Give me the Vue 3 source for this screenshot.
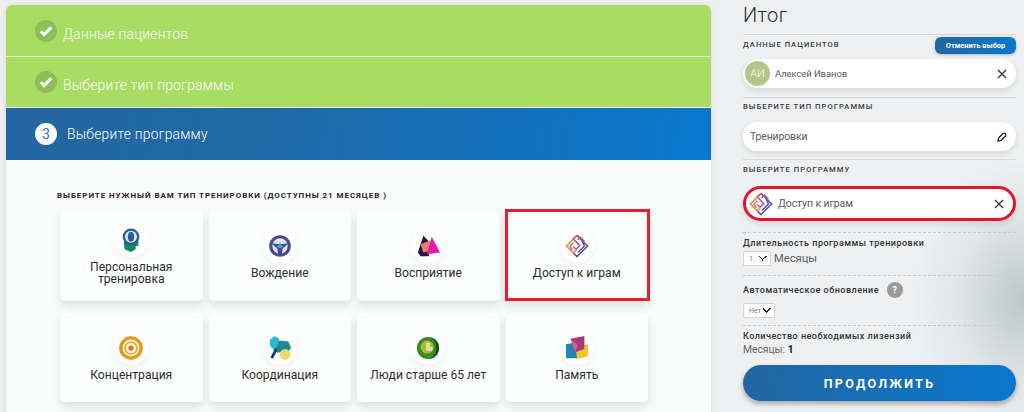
<script setup>
const cards = [
  { id: 'head', title: 'Персональная тренировка' },
  { id: 'wheel', title: 'Вождение' },
  { id: 'tri', title: 'Восприятие' },
  { id: 'maze', title: 'Доступ к играм', marked: true },
  { id: 'target', title: 'Концентрация' },
  { id: 'coord', title: 'Координация' },
  { id: 'old', title: 'Люди старше 65 лет' },
  { id: 'mem', title: 'Память' },
]
</script>

<template>
  <div class="page">
    <main class="panel">
      <div class="step done">
        <span class="badge check">
          <svg width="14" height="12" viewBox="0 0 14 12"><path d="M1.8 6.2 5.2 9.6 12.2 2.4" fill="none" stroke="#fff" stroke-width="3"/></svg>
        </span>
        <span class="step-text">Данные пациентов</span>
      </div>
      <div class="step done second">
        <span class="badge check">
          <svg width="14" height="12" viewBox="0 0 14 12"><path d="M1.8 6.2 5.2 9.6 12.2 2.4" fill="none" stroke="#fff" stroke-width="3"/></svg>
        </span>
        <span class="step-text">Выберите тип программы</span>
      </div>
      <div class="step active">
        <span class="badge num">3</span>
        <span>Выберите программу</span>
      </div>
      <section class="content">
        <h3>Выберите нужный вам тип тренировки (доступны 21 месяцев )</h3>
        <div class="grid">
          <div v-for="c in cards" :key="c.id" class="card" :class="{ marked: c.marked }">
            <span class="ico">
              <svg width="24" height="24" viewBox="0 0 26 26">
                <template v-if="c.id === 'head'">
                  <path d="M13 26 6 23 5 15 21 14 21 19 18 20 18 23Z" fill="#138a5e" />
                  <circle cx="13" cy="9.500" r="9" fill="#1f5f9e" />
                  <circle cx="13" cy="9.500" r="6.500" fill="#dbe7ee" />
                  <ellipse cx="13" cy="9.500" rx="3.500" ry="5.500" fill="#235f9a" />
                </template>
                <template v-else-if="c.id === 'wheel'">
                  <circle cx="13" cy="13" r="10" fill="#dfe7f2" stroke="#4a4a8c" stroke-width="3.400" />
                  <path d="M4 10 13 11 22 10 16 16 15 22 11 22 10 16Z" fill="#4a4a8c" />
                  <path d="M9 14 13 9.500 17 14 13 15.500Z" fill="#2fa6d6" />
                </template>
                <template v-else-if="c.id === 'tri'">
                  <path d="M2 20 8 2 13 7 14 24 5 24Z" fill="#2a1245" />
                  <path d="M5 11 15 7 19 17 8 20Z" fill="#e8806c" />
                  <path d="M17 3 26 20 12 22Z" fill="#e81aa8" />
                </template>
                <template v-else-if="c.id === 'maze'">
                  <g fill="none" stroke-width="1.700">
                    <path d="M13 1.500 24.500 13 13 24.500 9 20.500M18 6.500 21 13 14 20" stroke="#5a55b5" />
                    <path d="M13 1.500 9 5.500 16 12.500 12 16.500 9 13.500M13.500 6.500 17 3.500 21 8" stroke="#c0508c" />
                    <path d="M9 5.500 1.500 13 9 20.500 12.500 17" stroke="#ef8a4a" />
                    <path d="M5.500 13 9 9.500M8 17 5 13" stroke="#e06a6a" />
                  </g>
                </template>
                <template v-else-if="c.id === 'target'">
                  <circle cx="13" cy="13" r="11" fill="#fbf3dc" stroke="#dd9a1b" stroke-width="3.600" />
                  <circle cx="13" cy="13" r="6.500" fill="none" stroke="#e8a838" stroke-width="1.800" />
                  <circle cx="13" cy="13" r="2.800" fill="#d8701e" />
                </template>
                <template v-else-if="c.id === 'coord'">
                  <path d="M4 6 13 5 22 6 25 13 21 18 10 18 6 15Z" fill="#1b8a94" />
                  <path d="M2 4 7 0 12 3 11 9 8 14 4 13 2 9Z" fill="#2ab8d0" />
                  <path d="M4 24 9 14" stroke="#123e70" stroke-width="3" />
                  <circle cx="18.500" cy="20" r="5.800" fill="#ecd968" />
                </template>
                <template v-else-if="c.id === 'old'">
                  <circle cx="13" cy="13" r="12" fill="#3b8c1e" />
                  <path d="M13 1A12 12 0 0 1 13 25 9 12 0 0 0 13 1Z" fill="#174a14" />
                  <circle cx="12" cy="12" r="7" fill="#a9bb3c" />
                  <path d="M11 7H15V12H18V16H11Z" fill="#e5e2a0" />
                </template>
                <template v-else>
                  <path d="M1 9 12 7 13 24 1 24Z" fill="#1f86b8" />
                  <path d="M12 11 25 9 25 22 13 25Z" fill="#f0c828" />
                  <path d="M6 3 21 0 21 14 11 18Z" fill="#a63a78" />
                  <path d="M6 3 14 10 11 18Z" fill="#d9607a" />
                </template>
              </svg>
            </span>
            <span class="title">{{ c.title }}</span>
          </div>
        </div>
      </section>
    </main>

    <aside class="summary">
      <h2>Итог</h2>
      <div class="group first">
        <div class="label-row">
          <span class="label">Данные пациентов</span>
          <button class="cancel">Отменить выбор</button>
        </div>
        <div class="pill person">
          <span class="avatar">АИ</span>
          <span class="pill-text">Алексей Иванов</span>
          <svg class="action" width="10" height="10" viewBox="0 0 10 10"><path d="M1 1 9 9M9 1 1 9" stroke="#333" stroke-width="1.300" /></svg>
        </div>
      </div>
      <div class="group second-group">
        <div class="label">Выберите тип программы</div>
        <div class="pill plain">
          <span class="pill-text big">Тренировки</span>
          <svg class="action" width="10" height="10" viewBox="0 0 10 10"><path d="M1.500 6 6 1.500Q7 .8 8 1.500L8.500 2Q9.200 3 8.500 4L4 8.500 1 9Z" fill="none" stroke="#222" stroke-width="1.300" /></svg>
        </div>
      </div>
      <div class="group third-group">
        <div class="label">Выберите программу</div>
        <div class="pill chosen">
          <svg width="24" height="24" viewBox="0 0 26 26">
            <g fill="none" stroke-width="1.700">
              <path d="M13 1.500 24.500 13 13 24.500 9 20.500M18 6.500 21 13 14 20" stroke="#5a55b5" />
              <path d="M13 1.500 9 5.500 16 12.500 12 16.500 9 13.500M13.500 6.500 17 3.500 21 8" stroke="#c0508c" />
              <path d="M9 5.500 1.500 13 9 20.500 12.500 17" stroke="#ef8a4a" />
              <path d="M5.500 13 9 9.500M8 17 5 13" stroke="#e06a6a" />
            </g>
          </svg>
          <span class="pill-text chosen-text">Доступ к играм</span>
          <svg class="action" width="10" height="10" viewBox="0 0 10 10"><path d="M1 1 9 9M9 1 1 9" stroke="#333" stroke-width="1.300" /></svg>
        </div>
      </div>
      <div class="group dashed duration">
        <div class="field-label">Длительность программы тренировки</div>
        <div class="inline">
          <select class="sel one"><option>1</option></select>
          <span class="unit">Месяцы</span>
        </div>
      </div>
      <div class="group dashed renew">
        <div class="field-label with-help">Автоматическое обновление <span class="help">?</span></div>
        <select class="sel no"><option>Нет</option></select>
      </div>
      <div class="group dashed licenses">
        <div class="field-label">Количество необходимых лизензий</div>
        <div class="months">Месяцы: <b>1</b></div>
      </div>
      <button class="go">Продолжить</button>
    </aside>
  </div>
</template>

<style>
html, body { margin: 0; overflow: hidden; }
</style>

<style scoped>
.page {
  width: 1024px;
  height: 412px;
  overflow: hidden;
  box-sizing: border-box;
  padding: 5px 8px 0 6px;
  display: flex;
  gap: 32px;
  font-family: Roboto, "Liberation Sans", sans-serif;
  background: radial-gradient(ellipse 110px 140px at 1024px 300px, #bcc8c8 0%, rgba(215,222,222,.6) 60%, rgba(238,240,241,0) 100%), #eef0f1;
}
.panel {
  width: 705px;
  height: 420px;
  flex: none;
  border-radius: 6px 6px 0 0;
  overflow: hidden;
  background: #f9fafa;
  box-shadow: 0 0 6px rgba(0, 0, 0, .1);
}
.step {
  height: 51px;
  display: flex;
  align-items: center;
  gap: 6px;
  padding-left: 29px;
  font-size: 13.800px;
  font-weight: 300;
  color: #fff;
  letter-spacing: .25px;
}
.step-text { padding-top: 6px; }
.done { background: #a8dc63; }
.done.second { height: 50px; border-top: 1px solid #e4f3cf; margin-bottom: 1px; }
.active { height: 52px; gap: 10px; background: linear-gradient(100deg, #24669f 0%, #1f6aa8 40%, #0878cf 100%); }
.badge {
  width: 22px;
  height: 22px;
  border-radius: 50%;
  display: flex;
  align-items: center;
  justify-content: center;
  flex: none;
}
.check { background: #8dbe58; }
.num { background: #fff; color: #1f72b8; font-size: 14px; font-weight: 400; }
.content { padding: 30px 0 0 51px; }
h3 {
  margin: 0 0 9px;
  font-size: 8px;
  line-height: 11px;
  font-weight: 700;
  letter-spacing: .930px;
  text-transform: uppercase;
  color: #2b2426;
}
.grid {
  width: 596px;
  display: grid;
  grid-template-columns: repeat(4, 142.500px);
  grid-template-rows: 91px 89px;
  gap: 12px 6px;
  padding-left: 3px;
}
.card {
  position: relative;
  background: #fdfefe;
  border-radius: 5px;
  box-shadow: 0 5px 9px rgba(0, 0, 0, .1);
  display: flex;
  flex-direction: column;
  align-items: center;
  justify-content: center;
  padding-bottom: 3px;
  box-sizing: border-box;
}
.card.marked { border-radius: 0; }
.card.marked::after {
  content: '';
  position: absolute;
  left: -1px;
  right: -2px;
  top: -1px;
  bottom: 0;
  border: 3px solid #ed1c2e;
}
.ico {
  width: 34px;
  height: 34px;
  border-radius: 50%;
  background: #fff;
  box-shadow: 0 3px 8px rgba(0, 0, 0, .06);
  display: flex;
  align-items: center;
  justify-content: center;
  flex: none;
}
.title {
  margin-top: 4px;
  font-size: 12.100px;
  line-height: 12px;
  padding: 0 6px;
  color: #2d2d2d;
  text-align: center;
}
.card:first-child .title { padding: 0 24px; }
.summary { width: 273px; flex: none; color: #333; }
h2 {
  margin: -1px 0 0;
  height: 30px;
  font-size: 20px;
  line-height: 22px;
  font-weight: 300;
  color: #2a2a2a;
  letter-spacing: .4px;
}
.group { border-top: 1px solid #d5d9da; }
.label, .field-label {
  font-size: 7.600px;
  line-height: 12px;
  letter-spacing: 1.050px;
  text-transform: uppercase;
  font-weight: 500;
  color: #3a3a3a;
}
.field-label { font-size: 9px; text-transform: none; letter-spacing: .5px; color: #333; }
.label-row { display: flex; justify-content: space-between; align-items: flex-start; padding-top: 1px; height: 24px; box-sizing: border-box; }
.label-row .label { margin-top: 3px; }
.cancel {
  width: 81px;
  height: 17px;
  margin-top: 1px;
  border: 0;
  padding: 0;
  border-radius: 6px;
  color: #fff;
  font: 700 7.400px Roboto, sans-serif;
  background: linear-gradient(90deg, #24669f, #0878cf);
  box-shadow: 0 1px 3px rgba(0, 0, 0, .25);
}
.pill {
  background: #fff;
  border-radius: 15px;
  height: 29px;
  display: flex;
  align-items: center;
  box-shadow: 0 3px 6px rgba(0, 0, 0, .1);
  position: relative;
}
.person { padding-left: 2px; }
.avatar {
  width: 25px;
  height: 25px;
  border-radius: 50%;
  background: #b5c488;
  color: #fff;
  font-size: 11px;
  font-weight: 300;
  display: flex;
  align-items: center;
  justify-content: center;
  margin-right: 5px;
}
.pill-text { font-size: 9.500px; color: #5c5c5c; letter-spacing: -.1px; }
.pill-text.big { font-size: 10.400px; padding-left: 7px; }
.chosen-text { font-size: 10.500px; margin-left: 5px; }
.action { position: absolute; right: 9px; top: 50%; margin-top: -5px; }
.second-group { margin-top: 9px; padding-top: 3px; height: 62px; box-sizing: border-box; }
.second-group .label { margin-bottom: 9px; }
.third-group { padding-top: 4px; height: 73px; box-sizing: border-box; }
.third-group .label { margin-bottom: 10px; }
.chosen {
  height: 35px;
  border-radius: 18px;
  box-sizing: border-box;
  border: 3px solid #e5142d;
  padding-left: 3px;
}
.dashed { border-top: 1px dashed #c8cccd; }
.duration { padding-top: 4px; height: 43px; box-sizing: border-box; }
.inline { display: flex; align-items: center; gap: 3px; margin-top: 2px; }
.sel {
  appearance: none;
  font: 400 7px Roboto, sans-serif;
  height: 15px;
  padding: 0 0 0 5px;
  border: 1px solid #d4d6d7;
  border-radius: 1px;
  background-color: #fff;
  background-image: linear-gradient(45deg, transparent 50%, #222 50%, #222 65%, transparent 65%), linear-gradient(-45deg, transparent 50%, #222 50%, #222 65%, transparent 65%);
  background-size: 5px 5px, 5px 5px;
  background-position: right 7px center, right 3px center;
  background-repeat: no-repeat;
  color: #777;
  box-sizing: border-box;
}
.sel.one { width: 28px; }
.sel.no { width: 32px; display: block; margin-top: 4px; }
.unit { font-size: 11.200px; color: #5f5f5f; }
.renew { height: 50px; padding-top: 5px; box-sizing: border-box; }
.with-help { display: flex; align-items: center; gap: 8px; height: 18px; }
.help {
  width: 16px;
  height: 16px;
  border-radius: 50%;
  background: #9b9b9b;
  color: #fff;
  font-size: 9px;
  font-weight: 700;
  display: flex;
  align-items: center;
  justify-content: center;
}
.licenses { padding-top: 4px; height: 40px; box-sizing: border-box; }
.months { font-size: 10.300px; line-height: 15px; color: #666; }
.months b { color: #222; }
.go {
  display: block;
  width: 273px;
  height: 36px;
  border: 0;
  padding: 0;
  border-radius: 18px;
  background: linear-gradient(100deg, #24669f, #0878cf);
  color: #fff;
  font: 700 12.500px Roboto, sans-serif;
  letter-spacing: 2.300px;
  text-transform: uppercase;
  box-shadow: 0 3px 5px rgba(0, 0, 0, .3);
}
</style>
